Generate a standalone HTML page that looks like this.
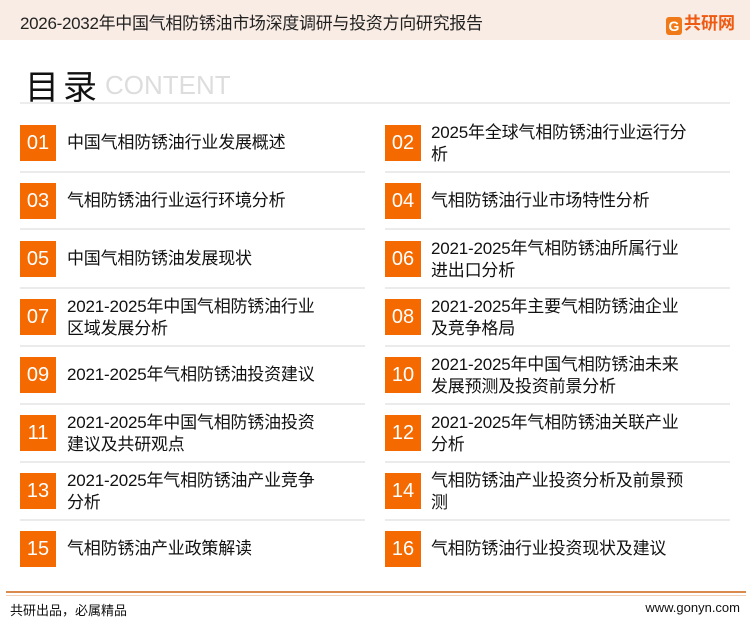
<!DOCTYPE html>
<html><head><meta charset="utf-8"><style>
*{margin:0;padding:0;box-sizing:border-box}
body{width:750px;height:622px;background:#fff;position:relative;overflow:hidden;font-family:"Liberation Sans","Noto Sans CJK SC",sans-serif;color:#222}
.hd{position:absolute;left:0;top:0;width:750px;height:40px;background:#f9ece4}
.hd .t{position:absolute;left:20px;top:9px;font-size:17px;color:#222;letter-spacing:-0.3px}
.logo{position:absolute;left:666px;top:9px;font-size:17px;font-weight:bold;color:#ee5a12}
.logo b{display:inline-block;width:16px;height:18px;background:#f07a18;color:#fff;font-size:14px;text-align:center;line-height:18px;border-radius:3px;vertical-align:-2px;margin-right:2px}
.ml{position:absolute;left:25px;top:60px;font-size:34px;color:#111;letter-spacing:4px}
.ct{position:absolute;left:105px;top:70px;font-size:26px;color:#ddd}
.hl{position:absolute;left:20px;top:102px;width:710px;height:2px;background:#ececec}
.box{position:absolute;width:36px;height:36px;background:#f56a00;color:#fff;font-size:20px;text-align:center;line-height:36px}
.tx{position:absolute;font-size:17px;line-height:22px;color:#111;white-space:nowrap;letter-spacing:-0.2px}
.sep{position:absolute;height:2px;background:#ebebeb}
.f1{position:absolute;left:6px;top:591px;width:740px;height:2px;background:#d98a4c}
.f2{position:absolute;left:6px;top:595px;width:740px;height:1px;background:#f1d2b8}
.ft{position:absolute;top:600px;font-size:13px;color:#111}
</style></head><body>
<div class="hd"><div class="t">2026-2032年中国气相防锈油市场深度调研与投资方向研究报告</div><div class="logo"><b>G</b>共研网</div></div>
<div class="ml">目录</div><div class="ct">CONTENT</div><div class="hl"></div>

<div class="box" style="left:20px;top:125px">01</div><div class="tx" style="left:67px;top:132px">中国气相防锈油行业发展概述</div>
<div class="box" style="left:385px;top:125px">02</div><div class="tx" style="left:431px;top:122px">2025年全球气相防锈油行业运行分<br>析</div>
<div class="sep" style="left:20px;top:171px;width:345px"></div><div class="sep" style="left:385px;top:171px;width:345px"></div>

<div class="box" style="left:20px;top:183px">03</div><div class="tx" style="left:67px;top:190px">气相防锈油行业运行环境分析</div>
<div class="box" style="left:385px;top:183px">04</div><div class="tx" style="left:431px;top:190px">气相防锈油行业市场特性分析</div>
<div class="sep" style="left:20px;top:228px;width:345px"></div><div class="sep" style="left:385px;top:228px;width:345px"></div>

<div class="box" style="left:20px;top:241px">05</div><div class="tx" style="left:67px;top:248px">中国气相防锈油发展现状</div>
<div class="box" style="left:385px;top:241px">06</div><div class="tx" style="left:431px;top:238px">2021-2025年气相防锈油所属行业<br>进出口分析</div>
<div class="sep" style="left:20px;top:287px;width:345px"></div><div class="sep" style="left:385px;top:287px;width:345px"></div>

<div class="box" style="left:20px;top:299px">07</div><div class="tx" style="left:67px;top:296px">2021-2025年中国气相防锈油行业<br>区域发展分析</div>
<div class="box" style="left:385px;top:299px">08</div><div class="tx" style="left:431px;top:296px">2021-2025年主要气相防锈油企业<br>及竞争格局</div>
<div class="sep" style="left:20px;top:345px;width:345px"></div><div class="sep" style="left:385px;top:345px;width:345px"></div>

<div class="box" style="left:20px;top:357px">09</div><div class="tx" style="left:67px;top:364px">2021-2025年气相防锈油投资建议</div>
<div class="box" style="left:385px;top:357px">10</div><div class="tx" style="left:431px;top:354px">2021-2025年中国气相防锈油未来<br>发展预测及投资前景分析</div>
<div class="sep" style="left:20px;top:403px;width:345px"></div><div class="sep" style="left:385px;top:403px;width:345px"></div>

<div class="box" style="left:20px;top:415px">11</div><div class="tx" style="left:67px;top:412px">2021-2025年中国气相防锈油投资<br>建议及共研观点</div>
<div class="box" style="left:385px;top:415px">12</div><div class="tx" style="left:431px;top:412px">2021-2025年气相防锈油关联产业<br>分析</div>
<div class="sep" style="left:20px;top:461px;width:345px"></div><div class="sep" style="left:385px;top:461px;width:345px"></div>

<div class="box" style="left:20px;top:473px">13</div><div class="tx" style="left:67px;top:470px">2021-2025年气相防锈油产业竞争<br>分析</div>
<div class="box" style="left:385px;top:473px">14</div><div class="tx" style="left:431px;top:470px">气相防锈油产业投资分析及前景预<br>测</div>
<div class="sep" style="left:20px;top:519px;width:345px"></div><div class="sep" style="left:385px;top:519px;width:345px"></div>

<div class="box" style="left:20px;top:531px">15</div><div class="tx" style="left:67px;top:538px">气相防锈油产业政策解读</div>
<div class="box" style="left:385px;top:531px">16</div><div class="tx" style="left:431px;top:538px">气相防锈油行业投资现状及建议</div>

<div class="f1"></div><div class="f2"></div>
<div class="ft" style="left:10px">共研出品，必属精品</div>
<div class="ft" style="right:10px">www.gonyn.com</div>
</body></html>
